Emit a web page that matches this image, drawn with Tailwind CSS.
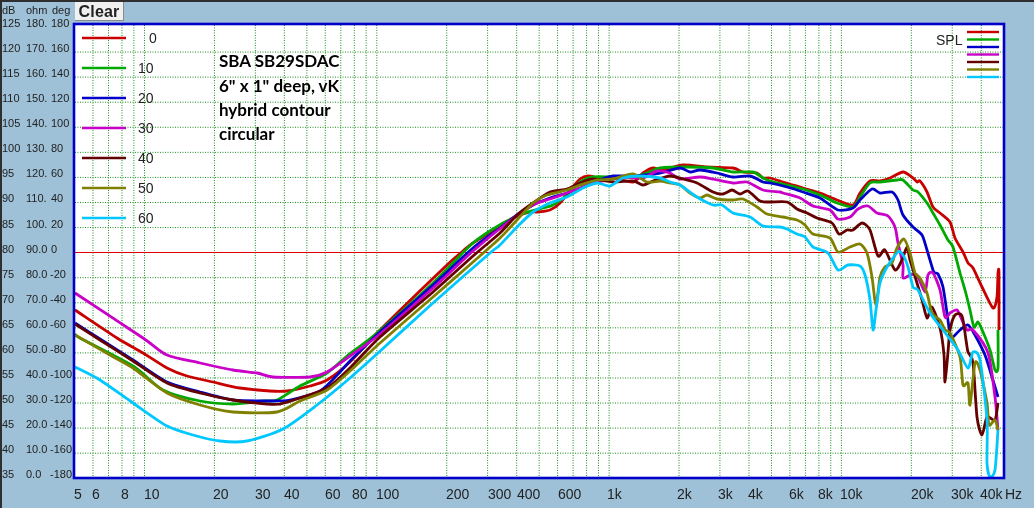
<!DOCTYPE html>
<html lang="en">
<head>
  <meta charset="UTF-8">
  <title>SBA SB29SDAC - SPL</title>
  <script src="https://cdn.jsdelivr.net/npm/@tailwindcss/browser@4"></script>
</head>
<body class="bg-[#9ec1d8]">
  <div class="relative w-[1034px] h-[508px] overflow-hidden bg-[#9ec1d8] border-l-2 border-t-2 border-[#2f2f2f] box-border">
    <svg id="chart" class="absolute left-[-2px] top-[-2px] blur-[0.5px]" width="1034" height="508" viewBox="0 0 1034 508"></svg>
    <!-- Clear sits on top of the plot frame -->
    <button class="absolute left-[73px] top-0 w-[49px] h-[19px] bg-[#f0f0f0] border-r border-b border-[#8a8a8a] font-['Liberation_Sans',sans-serif] font-bold text-[16px] leading-[19px] text-[#222] tracking-[0.2px] blur-[0.3px]">Clear</button>
  </div>
  <script>
    const rows = [
      ['125','180.','180'],['120','170.','160'],['115','160.','140'],['110','150.','120'],['105','140.','100'],
      ['100','130.','80'],['95','120.','60'],['90','110.','40'],['85','100.','20'],['80','90.0','0'],
      ['75','80.0','-20'],['70','70.0','-40'],['65','60.0','-60'],['60','50.0','-80'],['55','40.0','-100'],
      ['50','30.0','-120'],['45','20.0','-140'],['40','10.0','-160'],['35','0.0','-180']
    ];
    const xLabels = [['5',74],['6',92],['8',121],['10',144],['20',213],['30',255],['40',284],['60',325],['80',352],['100',376],
      ['200',446],['300',488],['400',517],['600',558],['1k',607],['2k',677],['3k',718],['4k',748],['6k',789],['8k',818],['10k',840],
      ['20k',911],['30k',951],['40k',980],['Hz',1005]];
    const freqs = [6,7,8,9,10,20,30,40,50,60,70,80,90,100,200,300,400,500,600,700,800,900,1000,2000,3000,4000,5000,6000,7000,8000,9000,10000,20000,30000,40000,50000];
    const fx = f => 144.5 + 232.3 * Math.log10(f / 10);

    // traced from the plot, pixel coords
    const curves = [
      { label: '0', cls: 'stroke-[#c80000]', pts: '75,310 117,338 143,353 167,368 187,376 213,382 240,388 270,391 287,391 310,386 327,380 350,362 380,330 447,265 463,251 473,243 500,226 515,217 530,212 537,212 550,210 560,203 572,188 580,179 588,176 600,178 613,178 633,182 643,173 653,168 663,170 683,165 707,167 733,168 743,172 757,173 763,178 770,178 783,182 803,188 820,193 837,200 853,205 860,193 870,181 880,181 890,178 903,172 913,178 917,182 920,181 927,192 933,207 940,213 950,222 955,238 963,252 968,263 973,268 982,287 993,308 997,297 998,273 999,273 999,330' },
      { label: '10', cls: 'stroke-[#00a800]', pts: '75,334 80,338 133,366 163,390 200,401 233,404 263,401 277,400 300,386 327,373 347,356 377,333 433,283 473,243 503,223 525,213 543,208 553,205 567,195 580,182 593,177 613,177 633,177 647,173 660,168 687,167 713,168 733,172 753,172 763,178 770,181 787,185 803,189 820,195 837,203 853,207 860,197 870,183 880,182 897,180 903,180 913,190 918,192 927,203 933,213 940,225 948,240 953,247 960,273 965,290 970,310 974,327 978,322 983,332 990,350 995,370 998,368 998,330' },
      { label: '20', cls: 'stroke-[#0000c8]', pts: '75,323 100,339 133,360 167,382 200,392 233,400 267,401 290,400 320,391 340,372 350,361 380,332 433,285 473,248 500,228 517,215 533,205 550,198 567,193 583,187 600,180 613,176 633,176 660,173 680,168 690,172 700,170 717,173 733,177 750,176 763,182 770,183 787,187 803,192 820,198 838,210 853,208 860,200 872,189 880,193 892,192 898,200 903,215 913,227 922,235 927,250 933,270 935,273 938,274 943,287 947,313 950,335 952,338 960,330 968,325 975,335 985,355 992,377 998,397' },
      { label: '30', cls: 'stroke-[#c800c8]', pts: '75,293 143,338 167,355 200,363 233,370 257,373 273,377 310,377 327,372 350,356 380,334 433,288 473,251 507,223 533,205 550,199 567,193 583,187 597,182 613,179 627,177 643,178 657,171 670,173 680,179 700,177 713,179 733,183 747,182 763,190 780,192 783,193 800,198 813,206 830,210 838,219 850,217 858,209 868,206 877,213 888,216 895,227 898,243 903,265 903,278 910,275 917,275 925,292 928,275 933,273 940,290 945,317 950,313 957,310 962,320 967,330 973,330 988,353 995,397 998,430' },
      { label: '40', cls: 'stroke-[#640000]', pts: '75,324 100,340 133,361 167,383 200,393 233,400 267,404 280,404 300,398 327,388 350,368 380,337 433,292 473,256 500,233 517,215 533,203 550,192 567,189 580,183 593,179 613,182 633,181 643,185 653,181 670,176 683,179 697,183 713,192 723,194 732,190 740,194 748,191 760,201 770,202 787,202 797,209 807,213 817,218 832,223 839,234 847,230 853,230 862,223 870,230 878,256 885,250 895,270 902,260 907,247 910,260 917,283 922,300 927,318 932,307 940,328 944,355 945,382 948,352 950,330 955,315 962,316 966,340 968,352 973,363 977,417 982,435 987,417 995,420 998,403' },
      { label: '50', cls: 'stroke-[#808000]', pts: '75,335 110,355 133,368 167,393 200,405 233,412 277,412 300,401 327,390 350,371 380,343 433,297 473,262 500,238 517,220 533,203 547,195 567,190 580,185 597,180 613,179 633,174 647,182 660,181 670,183 680,185 690,193 700,198 707,195 717,199 733,200 743,199 757,207 767,214 783,217 797,220 805,225 813,234 830,238 838,252 850,247 860,244 867,253 872,277 876,305 880,277 885,267 892,263 897,248 904,239 910,253 915,273 920,278 927,293 932,313 940,320 945,330 950,333 960,357 963,385 968,383 970,405 975,363 980,370 987,403 989,425 995,420 998,430' },
      { label: '60', cls: 'stroke-[#00c8ff]', pts: '75,367 100,380 133,403 167,426 193,435 220,441 247,441 283,429 317,405 350,378 378,353 433,303 490,253 500,245 517,227 533,212 550,203 567,197 583,188 597,183 610,186 623,178 640,176 660,178 670,182 680,185 697,197 713,205 722,205 733,213 750,217 763,226 780,227 787,229 797,234 805,237 813,247 828,253 838,270 848,265 860,266 865,275 870,300 873,330 876,310 880,283 887,267 898,252 903,255 908,267 913,287 918,290 930,313 943,330 958,350 968,368 973,352 980,360 987,420 987,463 990,477 995,470 998,430' }
    ];
    const titleLines = [['SBA SB29SDAC', 67], ['6" x 1" deep, vK', 92], ['hybrid contour', 116], ['circular', 140]];

    // catmull-rom through the traced points so the low end stays round
    function smooth(str) {
      const p = str.split(' ').map(s => s.split(',').map(Number));
      let d = `M${p[0][0]} ${p[0][1]}`;
      for (let i = 0; i < p.length - 1; i++) {
        const a = p[Math.max(i - 1, 0)], b = p[i], c = p[i + 1], e = p[Math.min(i + 2, p.length - 1)];
        const c1x = b[0] + (c[0] - a[0]) / 8, c1y = b[1] + (c[1] - a[1]) / 8;
        const c2x = c[0] - (e[0] - b[0]) / 8, c2y = c[1] - (e[1] - b[1]) / 8;
        d += `C${c1x.toFixed(1)} ${c1y.toFixed(1)} ${c2x.toFixed(1)} ${c2y.toFixed(1)} ${c[0]} ${c[1]}`;
      }
      return d;
    }

    let svg = '<rect x="74" y="24" width="930" height="454" class="fill-white"/>';

    // grid
    for (let n = 1; n < 18; n++) {
      const y = 27 + n * 25.07;
      if (n != 9) svg += `<line x1="75" x2="1003" y1="${y}" y2="${y}" class="stroke-[#1a8f1a]" stroke-dasharray="1 1.5"/>`;
    }
    for (const f of freqs) {
      const x = fx(f);
      svg += `<line x1="${x}" x2="${x}" y1="25" y2="477" class="stroke-[#1a8f1a]" stroke-dasharray="1 1.5"/>`;
    }
    svg += '<line x1="75" x2="1003" y1="252.5" y2="252.5" class="stroke-[#e00000]"/>';

    for (const c of curves) {
      svg += `<path d="${smooth(c.pts)}" fill="none" stroke-width="2.8" stroke-linejoin="round" class="${c.cls}"/>`;
    }
    svg += '<rect x="74" y="24" width="930" height="454" fill="none" stroke-width="2.6" class="stroke-[#0000c8]"/>';

    // legend, left and right
    curves.forEach((c, i) => {
      const y = 38 + i * 30;
      svg += `<line x1="82" x2="126" y1="${y}" y2="${y}" stroke-width="2.4" class="${c.cls}"/>`;
      svg += `<text x="${c.label == '0' ? 149 : 138}" y="${y + 5}" class="fill-[#222] text-[14px]">${c.label}</text>`;
      const y2 = 32 + i * 7.5;
      svg += `<line x1="967" x2="999" y1="${y2}" y2="${y2}" stroke-width="2.4" class="${c.cls}"/>`;
    });
    svg += '<text x="936" y="45" class="fill-[#222] text-[14px]">SPL</text>';

    // axis labels
    svg += '<text x="2" y="14" class="fill-[#222] text-[11px]">dB</text><text x="26" y="14" class="fill-[#222] text-[11px]">ohm</text><text x="52" y="14" class="fill-[#222] text-[11px]">deg</text>';
    rows.forEach((r, i) => {
      const y = 27 + i * 25.07;
      svg += `<text x="2" y="${y}" class="fill-[#222] text-[11px]">${r[0]}</text>`;
      svg += `<text x="26" y="${y}" class="fill-[#222] text-[11px]">${r[1]}</text>`;
      svg += `<text x="${r[2][0] == '-' ? 50 : 51}" y="${y}" class="fill-[#222] text-[11px]">${r[2]}</text>`;
    });
    for (const [t, x] of xLabels) {
      svg += `<text x="${x}" y="499" class="fill-[#222] text-[14px]">${t}</text>`;
    }

    for (const [t, y] of titleLines) {
      svg += `<text x="219" y="${y}" class="fill-black font-['Lato',sans-serif] font-bold text-[17px]">${t.replace(/"/g, '&quot;')}</text>`;
    }

    const chart = document.getElementById('chart');
    chart.classList.add("font-['Liberation_Sans',sans-serif]");
    chart.innerHTML = svg;
  </script>
</body>
</html>
